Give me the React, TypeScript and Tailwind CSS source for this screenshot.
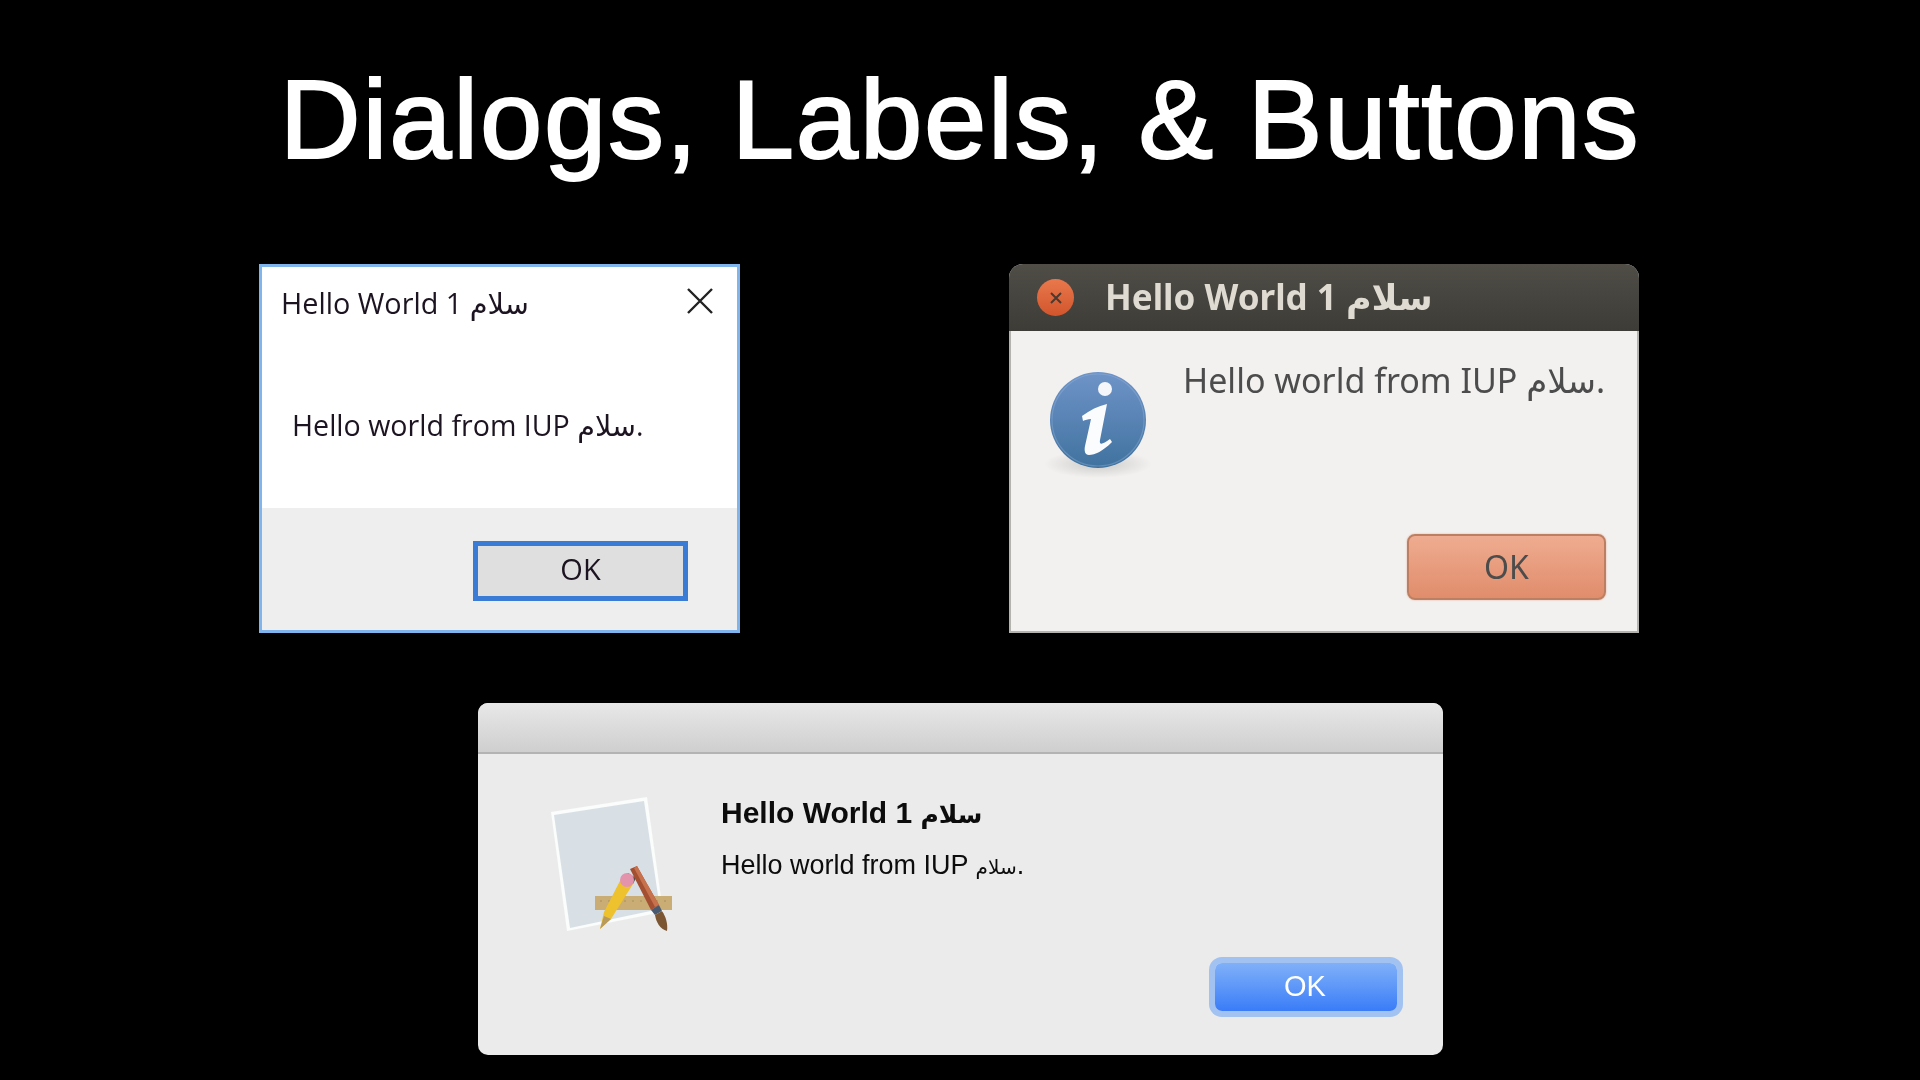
const MSG_TITLE = "Hello World 1 سلام";
const MSG_BODY = "Hello world from IUP سلام.";

function WindowsDialog() {
  return (
    <div className="flex h-[369px] w-[481px] flex-col border-[3px] border-[#7fb4ec] bg-white font-['Open_Sans','DejaVu_Sans',sans-serif] text-[#1c1420]">
      <div className="flex h-[241px] flex-col">
        <div className="flex items-start justify-between pt-[17px] pl-[19px] pr-[23px]">
          <span className="text-[28.8px] leading-[38px] blur-[0.4px]">{MSG_TITLE}</span>
          <svg className="mt-[3px]" width="28" height="28" viewBox="0 0 28 28">
            <path d="M2 2 L26 26 M26 2 L2 26" stroke="#222" strokeWidth="2.4" fill="none" />
          </svg>
        </div>
        <p className="mt-[84px] pl-[30px] text-[28.6px] leading-[38px] blur-[0.4px]">{MSG_BODY}</p>
      </div>
      <div className="flex flex-1 items-start justify-end bg-[#eeeeee] pt-[33px] pr-[49px]">
        <button className="h-[60px] w-[215px] border-[5px] border-[#3a7bd5] bg-[#dfdfdf] pb-[4px] text-[29px] blur-[0.3px]">OK</button>
      </div>
    </div>
  );
}

function InfoIcon() {
  return (
    <svg width="112" height="116" viewBox="0 0 112 116">
      <defs>
        <linearGradient id="infoFill" x1="0" y1="0" x2="0" y2="1">
          <stop offset="0" stopColor="#6f94c8" />
          <stop offset="1" stopColor="#40729f" />
        </linearGradient>
        <radialGradient id="infoShadow">
          <stop offset="0" stopColor="#000" stopOpacity="0.16" />
          <stop offset="1" stopColor="#000" stopOpacity="0" />
        </radialGradient>
      </defs>
      <ellipse cx="56" cy="94" rx="54" ry="14" fill="url(#infoShadow)" />
      <circle cx="56" cy="50" r="48" fill="url(#infoFill)" />
      <circle cx="56" cy="50" r="46" fill="none" stroke="#9db9de" strokeOpacity="0.35" strokeWidth="1.2" />
      <circle cx="63" cy="19" r="7" fill="#f4f6fa" />
      <path
        d="M40 46 C48 40 56 36 65 34 L58 70 C57 75 60 75 68 69 L70 72 C61 81 53 85 47 85 C43 85 42 81 43 76 L49 49 C46 49 43 50 41 51 Z"
        fill="#fbfcfd"
      />
    </svg>
  );
}

function UbuntuDialog() {
  return (
    <div className="flex h-[369px] w-[630px] flex-col overflow-hidden rounded-t-[14px] bg-[#f2f1f0] font-['Noto_Sans','DejaVu_Sans',sans-serif]">
      <div className="flex h-[67px] items-center bg-gradient-to-b from-[#4f4d46] to-[#3d3c37] pl-[28px]">
        <span className="flex h-[37px] w-[37px] items-center justify-center rounded-full bg-gradient-to-b from-[#e9784c] to-[#d2552c]">
          <svg width="14" height="14" viewBox="0 0 14 14">
            <path d="M2 2 L12 12 M12 2 L2 12" stroke="#4a3a30" strokeWidth="2" fill="none" />
          </svg>
        </span>
        <span className="ml-[31px] -mt-[3px] text-[35px] font-bold leading-none text-[#dfdbd2] blur-[0.4px]">{MSG_TITLE}</span>
      </div>
      <div className="flex flex-1 flex-col border-x-2 border-b-2 border-[#b5b3ae]">
        <div className="flex items-start pt-[29px] pl-[31px]">
          <div className="mt-[10px]">
            <InfoIcon />
          </div>
          <p className="ml-[29px] text-[34px] leading-[40px] text-[#4c4c4c] blur-[0.4px]">{MSG_BODY}</p>
        </div>
        <div className="flex flex-1 items-start justify-end pr-[31px]">
          <button className="mt-[48px] h-[66px] w-[199px] rounded-[8px] border-2 border-[#bd7f62] bg-gradient-to-b from-[#efac90] to-[#e08d6b] text-[32px] text-[#4c4c4c] shadow-[0_0_2px_#e8a78c] blur-[0.3px]">
            OK
          </button>
        </div>
      </div>
    </div>
  );
}

function XcodeIcon() {
  return (
    <svg width="130" height="145" viewBox="545 790 130 145">
      <defs>
        <filter id="soft" x="-10%" y="-10%" width="120%" height="120%">
          <feGaussianBlur stdDeviation="0.5" />
        </filter>
      </defs>
      <g filter="url(#soft)">
        <polygon points="551,812 647,797 663,912 567,931" fill="#fbfcfc" />
        <polygon points="554,815 644,801 660,909 570,928" fill="#d8e0e6" />
        <rect x="595" y="896" width="77" height="14" fill="#c9ad74" />
        <path d="M600 901 H668" stroke="#a98e5a" strokeWidth="1" strokeDasharray="2 6" />
        <polygon points="600,929 604,912 622,877 633,884 611,919" fill="#eec12f" />
        <polygon points="600,929 604,916 611,919" fill="#b89a5c" />
        <polygon points="622,877 627,880 633,884 636,878 628,873" fill="#55504a" />
        <circle cx="627" cy="880" r="7" fill="#e493ad" />
        <polygon points="630,869 637,866 659,905 651,910" fill="#a34f33" />
        <polygon points="634,868 637,866 659,905 655,907" fill="#c8714e" />
        <polygon points="651,910 659,905 662,911 655,915" fill="#4a5a70" />
        <path d="M655 915 L662 911 C666 917 668 924 667 931 C660 929 656 922 655 915 Z" fill="#7b5733" />
      </g>
    </svg>
  );
}

function MacDialog() {
  return (
    <div className="ml-[478px] flex h-[352px] w-[965px] flex-col overflow-hidden rounded-[10px] bg-[#ebebeb] font-['Liberation_Sans','DejaVu_Sans',sans-serif]">
      <div className="h-[51px] border-b-2 border-[#b3b3b3] bg-gradient-to-b from-[#e8e8e8] to-[#cfcfcf]" />
      <div className="flex flex-1">
        <div className="pt-[36px] pl-[67px]">
          <XcodeIcon />
        </div>
        <div className="flex flex-1 flex-col pt-[43px] pl-[46px] pr-[40px] pb-[37px] text-[#0c0c0c]">
          <div className="text-[30px] font-bold leading-[32px] blur-[0.3px]">
            Hello World 1 <span className="text-[25px]">سلام</span>
          </div>
          <div className="mt-[21px] text-[27px] leading-[28px] blur-[0.3px]">
            Hello world from IUP <span className="text-[20px]">سلام</span>.
          </div>
          <div className="mt-auto flex justify-end">
            <button className="mr-[6px] mb-[7px] h-[48px] w-[182px] rounded-[7px] bg-gradient-to-b from-[#80b0f8] to-[#3a7cf8] pr-[2px] text-[29px] text-white shadow-[0_0_0_6px_#a2c2f2] blur-[0.3px]">
              OK
            </button>
          </div>
        </div>
      </div>
    </div>
  );
}

export default function App() {
  return (
    <div className="h-screen w-full overflow-hidden bg-black">
      <h1 className="flex h-[264px] justify-center pt-[46px] font-['Liberation_Sans',sans-serif] text-[112px] leading-[148px] tracking-[1.8px] text-white [-webkit-text-stroke:2px_white]">
        Dialogs, Labels, &amp; Buttons
      </h1>
      <div className="flex gap-[269px] pl-[259px]">
        <WindowsDialog />
        <UbuntuDialog />
      </div>
      <div className="mt-[70px]">
        <MacDialog />
      </div>
    </div>
  );
}
